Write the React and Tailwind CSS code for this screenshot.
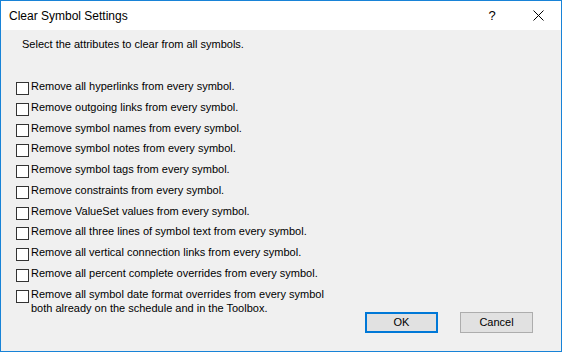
import React from "react";

const options = [
    "Remove all hyperlinks from every symbol.",
    "Remove outgoing links from every symbol.",
    "Remove symbol names from every symbol.",
    "Remove symbol notes from every symbol.",
    "Remove symbol tags from every symbol.",
    "Remove constraints from every symbol.",
    "Remove ValueSet values from every symbol.",
    "Remove all three lines of symbol text from every symbol.",
    "Remove all vertical connection links from every symbol.",
    "Remove all percent complete overrides from every symbol.",
];

const Box = () => (
    <span className="w-[13px] h-[13px] shrink-0 border border-[#333333] bg-white" />
);

export default function App() {
    return (
        <div className="w-[562px] h-[352px] border border-[#1883d7] bg-[#f0f0f0] flex flex-col font-['Liberation_Sans',Arial,sans-serif] text-black">
            {/* title bar */}
            <div className="h-[29px] bg-white flex items-center shrink-0">
                <span className="pl-[8px] text-[12px] flex-1">Clear Symbol Settings</span>
                <span className="w-[46px] text-center text-[13px]">?</span>
                <span className="w-[46px] h-[29px] flex items-center justify-center">
                    <svg width="11" height="11" viewBox="0 0 11 11">
                        <path d="M0.5 0.5 L10.5 10.5 M10.5 0.5 L0.5 10.5" stroke="#000" strokeWidth="1" />
                    </svg>
                </span>
            </div>

            <div className="pl-[21px] pt-[8px] text-[11px] leading-[13px]">
                Select the attributes to clear from all symbols.
            </div>

            <div className="flex flex-col pl-[15px] pt-[31px] text-[11px] leading-[14px]">
                {options.map((o) => (
                    <label key={o} className="h-[20.75px] flex items-start gap-[2px]">
                        <Box />
                        <span className="-mt-[3px]">{o}</span>
                    </label>
                ))}
                <div className="flex items-start">
                    <label className="flex items-start gap-[2px] w-[349px]">
                        <Box />
                        <span className="-mt-[3px]">
                            Remove all symbol date format overrides from every symbol
                            <br />
                            both already on the schedule and in the Toolbox.
                        </span>
                    </label>
                    <div className="flex gap-[22px] mt-[22px]">
                        <button className="w-[73px] h-[21px] border-2 border-[#0078d7] bg-[#e1e1e1] text-[11px]">
                            OK
                        </button>
                        <button className="w-[73px] h-[21px] border border-[#adadad] bg-[#e1e1e1] text-[11px]">
                            Cancel
                        </button>
                    </div>
                </div>
            </div>
        </div>
    );
}
